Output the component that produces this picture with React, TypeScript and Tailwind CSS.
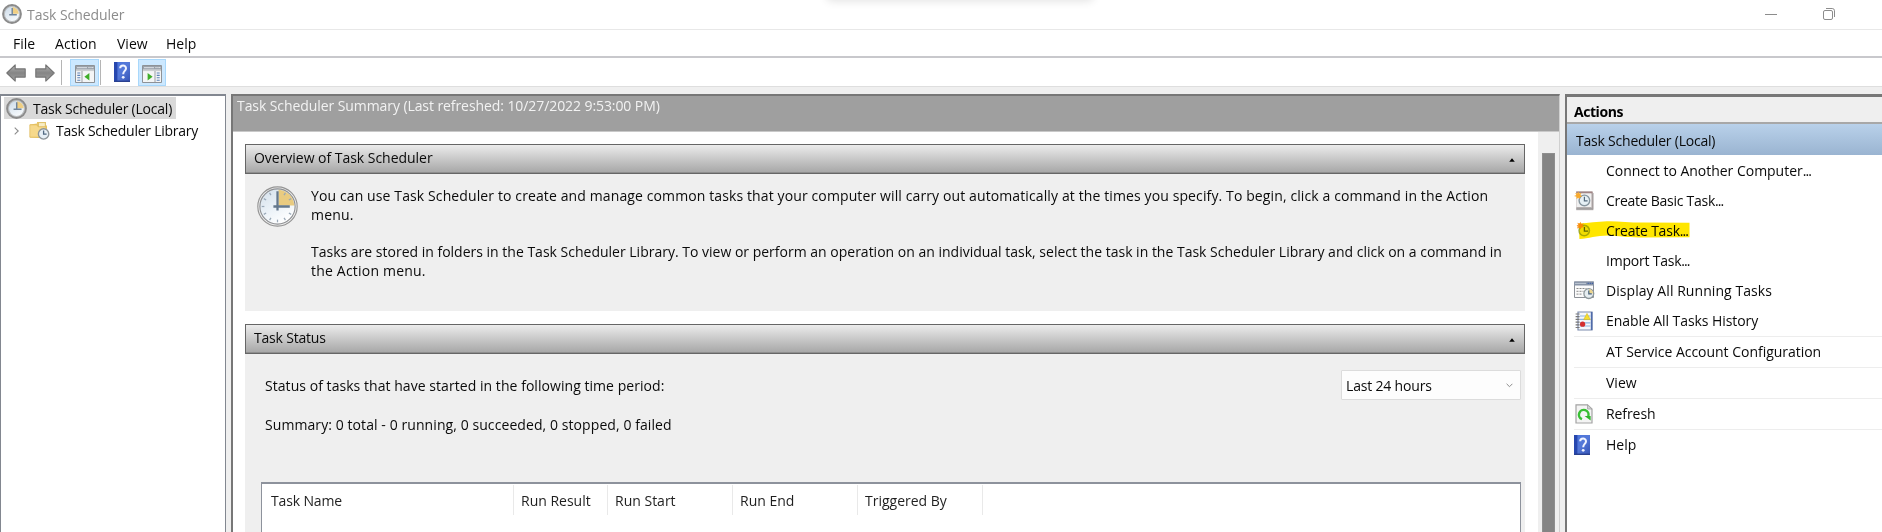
import type { ReactNode } from 'react';

function Clock({ className }: { className: string }) {
  return (
    <svg viewBox="0 0 40 40" className={className}>
      <defs>
        <linearGradient id="face" x1="0" y1="0" x2="0.6" y2="1">
          <stop offset="0" stopColor="#d3dfea" />
          <stop offset="0.55" stopColor="#eaf1f7" />
          <stop offset="1" stopColor="#ffffff" />
        </linearGradient>
      </defs>
      <circle cx="20" cy="20" r="19.2" fill="#f1f1f1" stroke="#939393" strokeWidth="1.1" />
      <circle cx="20" cy="20" r="17.2" fill="url(#face)" stroke="#8d8f92" strokeWidth="1.1" />
      <path d="M21 19V3.6A16.4 16.4 0 0 1 36.4 19Z" fill="#e9cb80" />
      {[30, 60, 120, 150, 180, 210, 240, 270, 300, 330].map((a) => (
        <path key={a} d="M20 4.6v2.6" stroke="#9aa9b8" strokeWidth="1.2" transform={`rotate(${a} 20 20)`} />
      ))}
      <path d="M20 5v19M16 20h16" stroke="#64788c" strokeWidth="2.2" fill="none" />
    </svg>
  );
}

function SmallClock({ className }: { className: string }) {
  return (
    <svg viewBox="0 0 20 20" className={className}>
      <defs>
        <linearGradient id="smallFace" x1="0" y1="0" x2="0.5" y2="1">
          <stop offset="0" stopColor="#c6d6e6" />
          <stop offset="1" stopColor="#f8fbfd" />
        </linearGradient>
      </defs>
      <circle cx="10" cy="10" r="8.8" fill="url(#smallFace)" stroke="#8b8b8b" strokeWidth="2.2" />
      <circle cx="10" cy="10" r="7.6" fill="none" stroke="#b9bcbe" strokeWidth="1" />
      <path d="M10.4 9.8V3A7 7 0 0 1 16.8 9.8Z" fill="#f0cf83" />
      <path d="M10.2 4v6.8M7.2 10.7h7.6" stroke="#6f849a" strokeWidth="1.4" fill="none" />
    </svg>
  );
}

function Arrow({ flip }: { flip?: boolean }) {
  return (
    <svg viewBox="0 0 20 18" className={flip ? 'h-[18px] w-5 -scale-x-100' : 'h-[18px] w-5'}>
      <defs>
        <linearGradient id="arrow" x1="0" y1="0" x2="0" y2="1">
          <stop offset="0" stopColor="#b3b3b3" />
          <stop offset="0.5" stopColor="#858585" />
          <stop offset="1" stopColor="#a2a2a2" />
        </linearGradient>
      </defs>
      <path d="M.8 9 9.2.9v4h10v8.2h-10v4Z" fill="url(#arrow)" stroke="#747474" strokeWidth="1.1" strokeLinejoin="round" />
    </svg>
  );
}

function PaneIcon({ flip }: { flip?: boolean }) {
  return (
    <svg viewBox="0 0 20 18" className="h-[18px] w-5">
      <path d="M.5.5h19v17H.5Z" fill="#f4f5f6" stroke="#8e9297" />
      <path d="M1 1h18v3.6H1Z" fill="#9aa1aa" />
      <path d="M2 2.7h10" stroke="#dfe3e8" />
      <path d="M13.5 2.6h1M15.5 2.6h1M17.3 2.6h1" stroke="#fff" />
      <path d="M1 5.6h18" stroke="#c7cacd" />
      <g transform={flip ? 'translate(20 0) scale(-1 1)' : undefined}>
        <path d="M7 6v11" stroke="#9b9fa4" />
        <path d="M2.3 8h3M2.3 10.4h3M2.3 12.8h3M2.3 15.2h3" stroke="#5c82b8" strokeWidth="1.1" />
        <path d="M14.4 8v7.6L9.4 11.8Z" fill="#3fae29" />
      </g>
    </svg>
  );
}

function HelpIcon() {
  return (
    <svg viewBox="0 0 16 20" className="h-5 w-4">
      <defs>
        <linearGradient id="help" x1="0" y1="0" x2="1" y2="1">
          <stop offset="0" stopColor="#4a74dd" />
          <stop offset="0.5" stopColor="#5478d8" />
          <stop offset="1" stopColor="#3452b4" />
        </linearGradient>
      </defs>
      <path d="M0 0h16v20H0Z" fill="url(#help)" />
      <path d="M0 0h3.4v20H0Z" fill="#2747ae" />
      <path d="M0 19.3h16" stroke="#29408f" strokeWidth="1.4" />
      <path d="M6.2 6.2C6.2 2.7 12 2.7 12 6.2c0 2.6-2.8 2.9-2.8 6" stroke="#f1f4ff" strokeWidth="2" fill="none" />
      <circle cx="9.2" cy="15.3" r="1.4" fill="#f1f4ff" />
    </svg>
  );
}

function FolderIcon() {
  return (
    <svg viewBox="0 0 21 19" className="h-[19px] w-[21px]">
      <path d="M1 3.4 8 2.6V1h9v3l1 1v10l-8 2-9-.6Z" fill="#e8c566" />
      <path d="M9.5 1.6h6.8V6H9.5Z" fill="#f8edc5" stroke="#d9b75c" strokeWidth=".7" />
      <path d="M.8 3.8h6.8l1.6 2H17v10.4H.8Z" fill="#f6d98c" stroke="#dfb957" strokeWidth=".7" />
      <circle cx="14.6" cy="12.9" r="5.2" fill="#e6eff6" stroke="#8c9499" strokeWidth="1.4" />
      <path d="M14.6 9.6v3.5h3" stroke="#4f6880" strokeWidth="1.3" fill="none" />
    </svg>
  );
}

function BasicTaskIcon() {
  return (
    <svg viewBox="0 0 20 20" className="h-5 w-5">
      <path d="M2.2.8h16l1.2 1.4v17H2.2Z" fill="#c8c0c0" />
      <path d="M2.2.4h16.4v2H2.2Z" fill="#a08484" />
      <path d="M2.6 2.4h14.6V16H2.6Z" fill="#f0f0f0" />
      <path d="M2.4 16.6h15l1.8 2.2H2.4Z" fill="#a2a0a0" />
      <path d="M18.8 2.4v16" stroke="#989292" />
      <circle cx="10.4" cy="9.4" r="5.3" fill="#e6f0f5" stroke="#87969f" strokeWidth="1.4" />
      <path d="M10.4 5.8v4h3.2" stroke="#566b7d" strokeWidth="1.2" fill="none" />
      <path d="m4.2.4.9 2.2L7.4 2 6.4 4.1l1.8 1.3L6 5.9l.2 2.2-1.8-1.4-2 1.4.2-2.4L0 5.1l2.4-1.2L1.2 2l2.2.6Z" fill="#f9aa2c" />
    </svg>
  );
}

function CreateTaskIcon() {
  return (
    <svg viewBox="0 0 21 21" className="h-[21px] w-[21px]">
      <circle cx="10.2" cy="10.6" r="5.2" fill="#f0f4c8" stroke="#a9ba70" strokeWidth="1.6" />
      <path d="M10.4 7v4.2h3.6" stroke="#5d7250" strokeWidth="1.3" fill="none" />
      <path d="m6.6 1.8.8 2.2 2.6-.4-1.4 2 1.2 1.6-2.4.2-.8 2.2-1.4-1.8-2.2.8.7-2.2-1.1-1 1.6-.7-.9-1.9 2.2.6Z" fill="#f99a2c" />
    </svg>
  );
}

function RunningIcon() {
  return (
    <svg viewBox="0 0 21 19" className="h-[19px] w-[21px]">
      <path d="M.5 1h19v15.5H.5Z" fill="#fbfbfb" stroke="#8c9097" />
      <path d="M0 .5h20v4H0Z" fill="#8793a6" />
      <path d="M1 2.4h11" stroke="#bfc8d4" />
      <path d="M13.6 2.4h1.2M15.7 2.4h1.2M17.8 2.4h1.2" stroke="#3e5fa8" strokeWidth="1.2" />
      <path d="M2.5 7.5h10M2.5 10.3h7M2.5 13.1h6" stroke="#8b8b8b" strokeDasharray="2 1" />
      <circle cx="14.8" cy="12.6" r="4.9" fill="#e6edf0" stroke="#8d979b" strokeWidth="1.3" />
      <path d="M15 12.4V8.3a4.2 4.2 0 0 1 4 4.1Z" fill="#edd58e" />
      <path d="M14.8 9.4v3.4h3" stroke="#47617a" strokeWidth="1.2" fill="none" />
    </svg>
  );
}

function HistoryIcon() {
  return (
    <svg viewBox="0 0 19 20" className="ml-px h-5 w-[19px]">
      <path d="M3 1h14v18H3Z" fill="#f5f8fc" stroke="#7d8bad" strokeWidth="1.2" />
      <path d="M16.6 1v18" stroke="#4f6bab" strokeWidth="1.6" />
      <path d="M5 5h10.5M5 8.4h10.5M5 11.8h10.5M5 15h10.5" stroke="#8fb3de" strokeWidth="1.2" />
      <path d="M.6 3h4M.6 5.7h4M.6 8.4h4M.6 11.1h4M.6 13.8h4M.6 16.5h4" stroke="#777" strokeWidth="1.2" />
      <path d="m12 2.4 3.3 6.2H8.7Z" fill="#f5de2e" stroke="#d5b81c" strokeWidth=".6" />
      <circle cx="7.6" cy="13.2" r="2.6" fill="#d42f2f" />
    </svg>
  );
}

function RefreshIcon() {
  return (
    <svg viewBox="0 0 18 20" className="ml-px h-5 w-[18px]">
      <path d="M1 .8h11.5L17 5v14H1Z" fill="#f4f4f4" stroke="#a3a3a3" strokeWidth="1.2" />
      <path d="M12.5.8V5H17Z" fill="#d3d3d3" stroke="#a3a3a3" strokeWidth=".8" />
      <path d="M7 15.2a4.8 4.8 0 1 1 6.3-3" stroke="#38bf33" strokeWidth="2.5" fill="none" />
      <path d="M9.6 12h6v4.6Z" fill="#2eb52a" />
    </svg>
  );
}

function SectionHeader({ children }: { children: ReactNode }) {
  return (
    <div className="flex h-[30px] items-center justify-between border border-[#666] bg-linear-to-b from-[#ececec] to-[#a6a6a6] pr-[9px] pb-[3px] pl-2 shadow-[inset_0_-1px_0_#8e8e8e]">
      {children}
      <svg viewBox="0 0 7 5" className="mt-[4px] h-[4px] w-[6px]">
        <path d="M3.5.2 7 4.8H0Z" fill="#000" />
      </svg>
    </div>
  );
}

function Action({ icon, children, className = 'h-[30px]' }: { icon?: ReactNode; children: ReactNode; className?: string }) {
  return (
    <div className={`relative flex items-center pb-px ${className}`}>
      <span className="flex w-[32px] shrink-0 items-center">{icon}</span>
      {children}
    </div>
  );
}

export default function App() {
  return (
    <div className="flex h-[532px] w-[1882px] flex-col overflow-hidden bg-[#efefef] font-['Open_Sans',sans-serif] text-[14px] leading-[19px] whitespace-nowrap text-[#0a0a0a]">
      <header className="relative flex h-[30px] shrink-0 items-center border-b border-[#e8e8e8] bg-white">
        <SmallClock className="mb-px ml-0.5 h-5 w-5" />
        <span className="ml-[5px] tracking-[-0.055px] text-[#8c8c8c]">Task Scheduler</span>
        <div className="absolute top-[-12px] left-[826px] h-3 w-[268px] rounded-lg shadow-[0_1px_10px_rgba(0,0,0,0.12)]" />
        <div className="mr-[47px] ml-auto flex items-center gap-[46px] pb-px">
          <span className="h-px w-3 bg-[#8c8c8c]" />
          <svg viewBox="0 0 12 12" className="h-3 w-3" fill="none" stroke="#8c8c8c">
            <rect x=".5" y="2.5" width="9" height="9" rx="1.5" />
            <path d="M3 .5h6.2a2.3 2.3 0 0 1 2.3 2.3V9" />
          </svg>
        </div>
      </header>

      <nav className="flex h-7 shrink-0 items-center border-b-2 border-[#c8c8cc] bg-white pl-3">
        <span className="w-[43px] pl-px">File</span>
        <span className="w-[61px] tracking-[0.1px]">Action</span>
        <span className="w-[50px] pl-px">View</span>
        <span>Help</span>
      </nav>

      <div className="flex h-[29px] shrink-0 items-center border-b border-[#dedede] bg-white pl-1.5">
        <span className="pt-0.5"><Arrow /></span>
        <span className="ml-[9px] pt-0.5"><Arrow flip /></span>
        <span className="ml-1.5 h-[25px] w-px bg-[#b5b5b5]" />
        <span className="ml-2 flex h-[27px] w-[29px] items-center justify-center border border-[#a9d8fb] bg-[#cce8ff] pt-1">
          <PaneIcon />
        </span>
        <span className="ml-px h-[25px] w-px bg-[#b5b5b5]" />
        <span className="mr-2 ml-[13px]"><HelpIcon /></span>
        <span className="flex h-[27px] w-7 items-center justify-center border border-[#a9d8fb] bg-[#cce8ff] pt-1">
          <PaneIcon flip />
        </span>
      </div>

      <main className="flex min-h-0 flex-1 pt-[7px]">
        <aside className="w-[226px] shrink-0 border-t-2 border-r border-l border-[#828790] bg-white pt-px">
          <div className="ml-[3px] flex h-[22px] w-[172px] items-center bg-[#d9d9d9]">
            <SmallClock className="ml-0.5 h-[21px] w-[21px]" />
            <span className="ml-1.5 tracking-[-0.22px]">Task Scheduler (Local)</span>
          </div>
          <div className="flex h-[23px] items-center">
            <svg viewBox="0 0 5 8" className="ml-[13px] h-2 w-[5px]" fill="none" stroke="#8c8c8c" strokeWidth="1.1">
              <path d="M.7.7 4.2 4 .7 7.3" />
            </svg>
            <span className="mr-[6px] ml-[10px]"><FolderIcon /></span>
            <span className="tracking-[-0.25px]">Task Scheduler Library</span>
          </div>
        </aside>

        <section className="ml-[5px] flex w-[1329px] shrink-0 flex-col border-t-2 border-r border-l-2 border-[#777] border-r-[#d0d0d0] bg-white">
          <div className="h-9 shrink-0 border-b border-[#c9c9c9] bg-[#9f9f9f] pl-1 tracking-[-0.08px] text-[#f2f2f2]">
            Task Scheduler Summary (Last refreshed: 10/27/2022 9:53:00 PM)
          </div>
          <div className="flex min-h-0 flex-1 justify-between">
            <div className="ml-3 w-[1280px] pt-3">
              <SectionHeader><span className="tracking-[-0.03px]">Overview of Task Scheduler</span></SectionHeader>
              <div className="mb-[13px] flex h-[137px] bg-[#efefef] pt-3 pl-3">
                <Clock className="h-[41px] w-[41px]" />
                <div className="ml-[13px] pt-px leading-[18.75px]">
                  <p className="tracking-[0.115px]">You can use Task Scheduler to create and manage common tasks that your computer will carry out automatically at the times you specify. To begin, click a command in the Action</p>
                  <p className="tracking-[0.2px]">menu.</p>
                  <p className="mt-[18.75px]">Tasks are stored in folders in the Task Scheduler Library. To view or perform an operation on an individual task, select the task in the Task Scheduler Library and click on a command in</p>
                  <p className="tracking-[0.2px]">the Action menu.</p>
                </div>
              </div>
              <SectionHeader><span className="tracking-[-0.2px]">Task Status</span></SectionHeader>
              <div className="h-[180px] bg-[#efefef] pt-4 pr-1 pl-4">
                <div className="flex h-[30px] items-center justify-between pl-1">
                  <span className="tracking-[0.05px]">Status of tasks that have started in the following time period:</span>
                  <span className="flex h-[30px] w-[180px] items-center justify-between rounded-[1px] border border-[#dcdcdc] bg-[#fdfdfd] pr-[7px] pl-1">
                    <span className="tracking-[-0.18px]">Last 24 hours</span>
                    <svg viewBox="0 0 7 5" className="h-[5px] w-[7px]" fill="none" stroke="#8c8c8c">
                      <path d="m.6.8 2.9 2.9L6.4.8" />
                    </svg>
                  </span>
                </div>
                <p className="mt-[15px] pl-1 tracking-[0.08px]">Summary: 0 total - 0 running, 0 succeeded, 0 stopped, 0 failed</p>
                <div className="mt-[48px] h-[70px] border border-t-2 border-[#8d929c] bg-white pt-px">
                  <div className="flex h-[30px] items-center text-[#1f1f1f]">
                    <span className="flex h-full w-[252px] items-center border-r border-[#e9e9e9] pl-[9px] tracking-[-0.15px]">Task Name</span>
                    <span className="flex h-full w-[94px] items-center border-r border-[#e9e9e9] pl-[7px]">Run Result</span>
                    <span className="flex h-full w-[125px] items-center border-r border-[#e9e9e9] pl-[7px]">Run Start</span>
                    <span className="flex h-full w-[125px] items-center border-r border-[#e9e9e9] pl-[7px]">Run End</span>
                    <span className="flex h-full w-[125px] items-center border-r border-[#e9e9e9] pl-[7px]">Triggered By</span>
                  </div>
                </div>
              </div>
            </div>
            <div className="w-[21px] bg-[#efefef] pt-[21px] pl-1">
              <div className="h-[400px] w-[13px] border border-b-0 border-[#8e8e8e] bg-[#848484]" />
            </div>
          </div>
        </section>

        <aside className="ml-[5px] flex flex-1 flex-col border-t-[3px] border-l-2 border-[#777] bg-white">
          <div className="h-[27px] shrink-0 border-b-2 border-[#a8a8a8] bg-[#efefef] pt-[5px] pl-[7px] font-bold tracking-[-0.45px] text-black">Actions</div>
          <div className="flex h-[31px] shrink-0 items-center bg-linear-to-b from-[#b9d1ea] to-[#9ab4d1] pt-0.5 pl-[9px] tracking-[-0.21px]">
            Task Scheduler (Local)
          </div>
          <div className="flex flex-col pt-px pl-[7px]">
            <Action><span className="tracking-[-0.02px]">Connect to Another Computer<span className="tracking-[-0.9px]">...</span></span></Action>
            <Action icon={<BasicTaskIcon />}><span className="tracking-[-0.27px]">Create Basic Task<span className="tracking-[-0.9px]">...</span></span></Action>
            <Action icon={<CreateTaskIcon />}>
              <span className="tracking-[-0.22px]">Create Task<span className="tracking-[-0.9px]">...</span></span>
              <svg viewBox="0 0 112 20" className="absolute top-[5px] left-[5px] h-5 w-28 mix-blend-multiply">
                <path d="M0 2.6C10 2 18 .6 28 .2 40 0 52 1.8 65 1.6L110.5 1.8V16.2L60 16.6C46 16.4 40 15 30 14.6 18 14.4 10 17.6.4 18Z" fill="#ffe600" />
              </svg>
            </Action>
            <Action><span className="tracking-[-0.22px]">Import Task<span className="tracking-[-0.9px]">...</span></span></Action>
            <Action icon={<RunningIcon />}><span className="tracking-[0.06px]">Display All Running Tasks</span></Action>
            <Action icon={<HistoryIcon />} className="h-[30px]"><span className="tracking-[-0.07px]">Enable All Tasks History</span></Action>
            <Action className="h-[31px] border-t border-[#ededed]"><span className="tracking-[-0.025px]">AT Service Account Configuration</span></Action>
            <Action className="h-[31px] border-t border-[#ededed]">View</Action>
            <Action className="h-[31px] border-t border-[#ededed]" icon={<RefreshIcon />}><span className="tracking-[-0.08px]">Refresh</span></Action>
            <Action className="h-[31px] border-t border-[#ededed]" icon={<HelpIcon />}>Help</Action>
          </div>
        </aside>
      </main>
    </div>
  );
}
